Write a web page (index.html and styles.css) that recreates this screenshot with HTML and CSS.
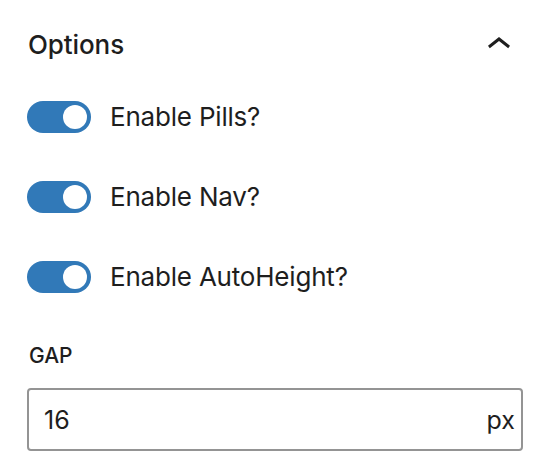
FILE: index.html
```html
<!DOCTYPE html>
<html lang="en">
<head>
<meta charset="utf-8">
<title>Options</title>
<link rel="stylesheet" href="styles.css">
</head>
<body>
<div class="panel">
  <div class="header">
    <span class="title">Options</span>
    <svg class="chevron" viewBox="0 0 24 24" width="48" height="48" aria-hidden="true"><path d="M6.5 12.4L12 8l5.5 4.4-.9 1.2L12 10l-4.6 3.6-.9-1.2z"/></svg>
  </div>
  <div class="toggles">
    <label class="toggle-row"><span class="toggle"><span class="thumb"></span></span><span class="toggle-label">Enable Pills?</span></label>
    <label class="toggle-row"><span class="toggle"><span class="thumb"></span></span><span class="toggle-label">Enable Nav?</span></label>
    <label class="toggle-row"><span class="toggle"><span class="thumb"></span></span><span class="toggle-label">Enable AutoHeight?</span></label>
  </div>
  <div class="field">
    <div class="field-label">GAP</div>
    <div class="input">
      <span class="value">16</span>
      <span class="unit">px</span>
    </div>
  </div>
</div>
</body>
</html>
```

FILE: styles.css
```css
html, body {
  margin: 0;
  padding: 0;
  background: #ffffff;
}
body {
  font-family: Inter, "Noto Sans", "Liberation Sans", sans-serif;
  color: #1e1e1e;
}
.panel {
  padding: 21px 31px 0 27px;
  display: flex;
  flex-direction: column;
}
.header {
  height: 48px;
  display: flex;
  align-items: center;
  justify-content: space-between;
}
.title {
  font-size: 26px;
  font-weight: 500;
  line-height: 48px;
  padding-left: 1px;
  letter-spacing: -0.1px;
}
.chevron {
  fill: #1e1e1e;
  display: block;
}
.toggles {
  margin-top: 32px;
  display: flex;
  flex-direction: column;
  gap: 48px;
}
.toggle-row {
  display: flex;
  align-items: center;
  height: 32px;
}
.toggle {
  position: relative;
  width: 64px;
  height: 32px;
  border-radius: 16px;
  background: #3179b8;
  flex: none;
}
.thumb {
  position: absolute;
  top: 4px;
  left: 36px;
  width: 24px;
  height: 24px;
  border-radius: 50%;
  background: #ffffff;
}
.toggle-label {
  margin-left: 19px;
  font-size: 26px;
  line-height: 32px;
  letter-spacing: -0.2px;
}
.field {
  margin-top: 52px;
  display: flex;
  flex-direction: column;
}
.field-label {
  font-size: 21px;
  font-weight: 500;
  line-height: 22px;
  text-transform: uppercase;
  padding-left: 2px;
}
.input {
  margin-top: 21px;
  height: 63px;
  box-sizing: border-box;
  border: 2px solid #949494;
  border-radius: 4px;
  display: flex;
  align-items: center;
  justify-content: space-between;
  padding: 0 6px 0 15px;
  font-size: 25px;
}
```
